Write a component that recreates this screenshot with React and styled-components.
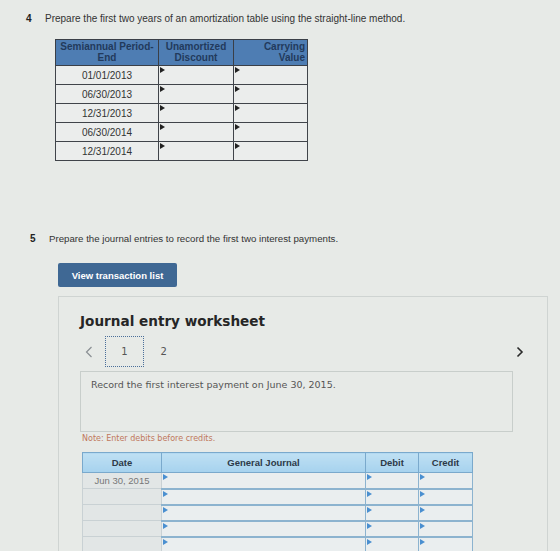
import React from "react";
import styled, { createGlobalStyle } from "styled-components";

const GlobalStyle = createGlobalStyle`
  html, body {
    margin: 0;
    padding: 0;
    background: #e7eae7;
  }
  body {
    font-family: "Liberation Sans", Arial, sans-serif;
    color: #2b2b2b;
  }
`;

const Page = styled.div`
  width: 560px;
  height: 551px;
  overflow: hidden;
  padding: 13px 0 0 26px;
  box-sizing: border-box;
`;

const Question = styled.div`
  display: flex;
  align-items: baseline;
  font-size: ${(p) => p.$size || 10}px;
  color: #333;
  margin: ${(p) => p.$margin || "0"};
`;

const Num = styled.span`
  font-weight: bold;
  font-size: 10px;
  width: 19px;
  flex: none;
  color: #222;
`;

const AmortTable = styled.table`
  border-collapse: collapse;
  margin: 15px 0 0 29px;
  width: 252px;
  font-size: 10px;
  table-layout: fixed;
`;

const AmortHead = styled.th`
  background: #4e7db3;
  color: #223a5c;
  font-weight: bold;
  border: 1.5px solid #3a3f47;
  line-height: 11px;
  padding: 1px 2px 2px;
  height: 26px;
  box-sizing: border-box;
  text-align: ${(p) => p.$align || "center"};
  vertical-align: top;
`;

const AmortCell = styled.td`
  border: 1.5px solid #40444a;
  height: 19px;
  box-sizing: border-box;
  text-align: center;
  color: #333;
  background: #ebedec;
  padding: 0;
  position: relative;
`;

const Marker = styled.span`
  position: absolute;
  left: 1px;
  top: 1px;
  width: 0;
  height: 0;
  border-top: 3px solid transparent;
  border-bottom: 3px solid transparent;
  border-left: 5px solid ${(p) => p.$color || "#222"};
`;

const ViewButton = styled.button`
  display: block;
  margin: 19px 0 0 32px;
  width: 119px;
  height: 24px;
  background: #3f6894;
  border: none;
  border-radius: 2px;
  color: #fff;
  font-family: "Liberation Sans", Arial, sans-serif;
  font-weight: bold;
  font-size: 9.5px;
  padding: 0;
`;

const Panel = styled.section`
  margin: 9px 0 0 32px;
  width: 490px;
  height: 300px;
  border: 1px solid #cfd4d2;
  border-bottom: none;
  box-sizing: border-box;
  padding: 16px 0 0 21px;
  font-family: "DejaVu Sans", Verdana, sans-serif;
`;

const Title = styled.h2`
  margin: 0;
  font-size: 13.6px;
  line-height: 16px;
  font-weight: bold;
  color: #262626;
`;

const TabRow = styled.div`
  display: flex;
  align-items: center;
  height: 31px;
  margin-top: 7px;
  width: 447px;
`;

const Chevron = styled.span`
  display: flex;
  align-items: center;
  justify-content: center;
  width: 14px;
  margin-left: ${(p) => p.$ml || 0}px;
`;

const Tab = styled.div`
  width: 40px;
  height: 31px;
  box-sizing: border-box;
  display: flex;
  align-items: center;
  justify-content: center;
  font-size: 10px;
  color: #555;
  border: ${(p) => (p.$active ? "1.5px dotted #4b6f9a" : "none")};
  margin-left: ${(p) => p.$ml || 0}px;
`;

const RecordBox = styled.div`
  margin-top: 4px;
  width: 433px;
  height: 61px;
  box-sizing: border-box;
  border: 1px solid #c8cecb;
  padding: 7px 10px;
  font-size: 9.5px;
  color: #555;
`;

const Note = styled.div`
  margin: 2px 0 0 2px;
  font-size: 8px;
  color: #c0785c;
`;

const JournalTable = styled.table`
  border-collapse: collapse;
  margin: 9px 0 0 2px;
  width: 390px;
  table-layout: fixed;
  font-family: "Liberation Sans", Arial, sans-serif;
  font-size: 9.5px;
`;

const JournalHead = styled.th`
  height: 20px;
  box-sizing: border-box;
  padding: 0;
  background: linear-gradient(#bfe0f3, #a6d2ee);
  border: 1px solid #7aa9cc;
  color: #2d3a48;
  font-weight: bold;
`;

const JournalCell = styled.td`
  height: 16px;
  box-sizing: border-box;
  padding: 0;
  border-style: solid;
  border-width: ${(p) => (p.$date ? "1px" : "1px 1px 2px 1px")};
  border-color: ${(p) => (p.$date ? "#c9d1d4" : "#8cb3cf")};
  background: ${(p) => (p.$date ? "#e2e6e6" : "#eaeeef")};
  text-align: center;
  color: #777;
  position: relative;
`;

const amortRows = ["01/01/2013", "06/30/2013", "12/31/2013", "06/30/2014", "12/31/2014"];
const journalRows = ["Jun 30, 2015", "", "", "", ""];

const LeftArrow = () => (
  <svg width="8" height="12" viewBox="0 0 8 12">
    <path d="M6.5 1 L1.5 6 L6.5 11" fill="none" stroke="#8a8f93" strokeWidth="1.2" />
  </svg>
);

const RightArrow = () => (
  <svg width="8" height="12" viewBox="0 0 8 12">
    <path d="M1.5 1.5 L6 6 L1.5 10.5" fill="none" stroke="#2a2a2a" strokeWidth="1.6" />
  </svg>
);

export default function App() {
  return (
    <>
      <GlobalStyle />
      <Page>
        <Question>
          <Num>4</Num>
          <span>Prepare the first two years of an amortization table using the straight-line method.</span>
        </Question>

        <AmortTable>
          <colgroup>
            <col style={{ width: 103 }} />
            <col style={{ width: 75 }} />
            <col style={{ width: 74 }} />
          </colgroup>
          <thead>
            <tr>
              <AmortHead>Semiannual Period-<br />End</AmortHead>
              <AmortHead>Unamortized<br />Discount</AmortHead>
              <AmortHead $align="right">Carrying<br />Value</AmortHead>
            </tr>
          </thead>
          <tbody>
            {amortRows.map((d) => (
              <tr key={d}>
                <AmortCell>{d}</AmortCell>
                <AmortCell><Marker /></AmortCell>
                <AmortCell><Marker /></AmortCell>
              </tr>
            ))}
          </tbody>
        </AmortTable>

        <Question $margin="72px 0 0 4px" $size={9.7}>
          <Num>5</Num>
          <span>Prepare the journal entries to record the first two interest payments.</span>
        </Question>

        <ViewButton>View transaction list</ViewButton>

        <Panel>
          <Title>Journal entry worksheet</Title>
          <TabRow>
            <Chevron $ml={2}><LeftArrow /></Chevron>
            <Tab $active $ml={9}>1</Tab>
            <Tab>2</Tab>
            <Chevron $ml={330}><RightArrow /></Chevron>
          </TabRow>
          <RecordBox>Record the first interest payment on June 30, 2015.</RecordBox>
          <Note>Note: Enter debits before credits.</Note>
          <JournalTable>
            <colgroup>
              <col style={{ width: 79 }} />
              <col style={{ width: 204 }} />
              <col style={{ width: 53 }} />
              <col style={{ width: 54 }} />
            </colgroup>
            <thead>
              <tr>
                <JournalHead>Date</JournalHead>
                <JournalHead>General Journal</JournalHead>
                <JournalHead>Debit</JournalHead>
                <JournalHead>Credit</JournalHead>
              </tr>
            </thead>
            <tbody>
              {journalRows.map((d, i) => (
                <tr key={i}>
                  <JournalCell $date>{d}</JournalCell>
                  <JournalCell><Marker $color="#4a8fd0" /></JournalCell>
                  <JournalCell><Marker $color="#4a8fd0" /></JournalCell>
                  <JournalCell><Marker $color="#4a8fd0" /></JournalCell>
                </tr>
              ))}
            </tbody>
          </JournalTable>
        </Panel>
      </Page>
    </>
  );
}
